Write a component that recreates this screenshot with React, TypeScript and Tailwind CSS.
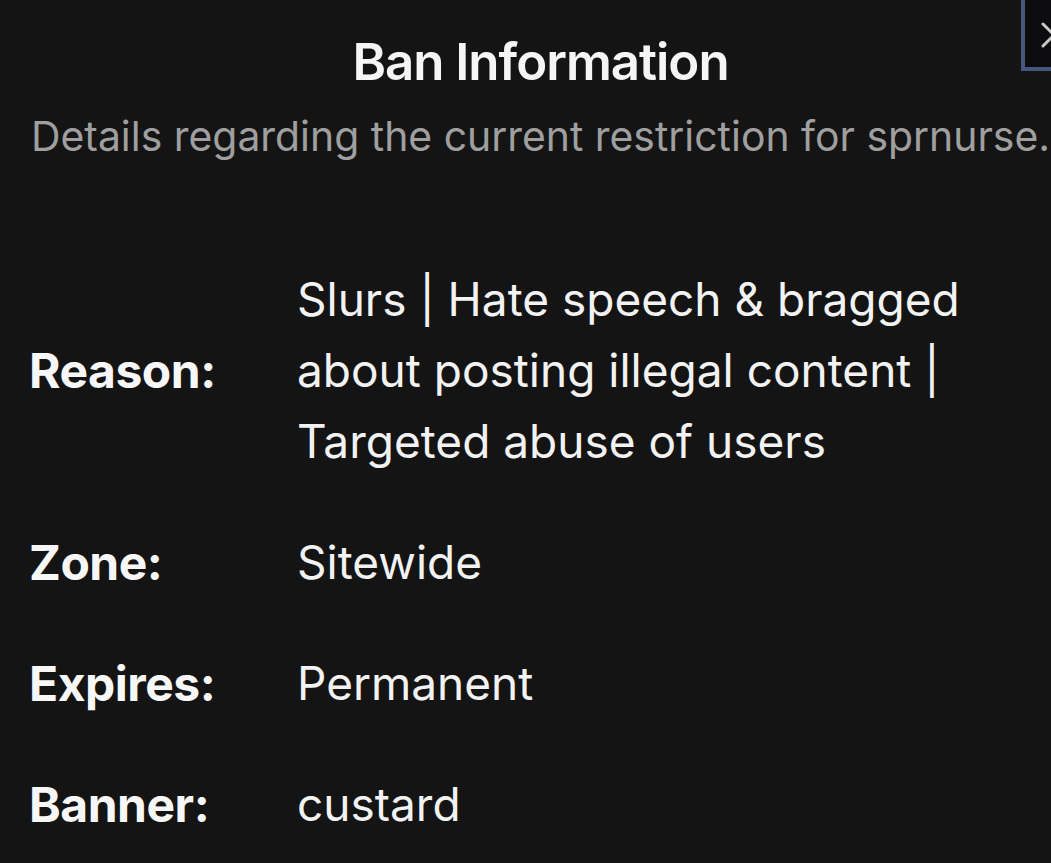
import React from "react";

const rows: { label: string; value: string }[] = [
  { label: "Zone:", value: "Sitewide" },
  { label: "Expires:", value: "Permanent" },
  { label: "Banner:", value: "custard" },
];

export default function App() {
  return (
    <div
      className="relative w-[1051px] h-[863px] overflow-hidden bg-[#141414] text-white"
      style={{ fontFamily: "Inter, 'Noto Sans', sans-serif" }}
    >
      <div className="absolute left-[1021px] top-[-12px] w-[60px] h-[83px] border-[4px] border-[#46577f] bg-[#0c0c0e] flex items-center pl-[14px] pt-[10px]">
        <svg width="30" height="30" viewBox="0 0 30 30">
          <path d="M4 4 L26 26 M26 4 L4 26" stroke="#c9c9c9" strokeWidth="3" strokeLinecap="round" />
        </svg>
      </div>

      <div className="flex flex-col items-center pl-[30px] pt-[30px]">
        <h1 className="text-[51px] leading-[64px] font-semibold tracking-[-0.02em] text-[#f5f5f5]">
          Ban Information
        </h1>
        <p className="mt-[16px] text-[40.9px] leading-[52px] text-[#9f9f9f] whitespace-nowrap">
          Details regarding the current restriction for sprnurse.
        </p>
      </div>

      <div className="flex flex-col gap-[50px] pl-[29px] pt-[102px]">
        <div className="flex items-center">
          <div className="w-[268px] shrink-0 text-[48px] font-bold tracking-[-0.01em] text-[#f7f7f7] leading-[71px]">
            Reason:
          </div>
          <div className="w-[735px] text-[46px] leading-[71px] text-[#f2f2f2]">
            Slurs | Hate speech & bragged about posting illegal content | Targeted abuse of users
          </div>
        </div>
        {rows.map((r) => (
          <div key={r.label} className="flex items-center">
            <div className="w-[268px] shrink-0 text-[48px] font-bold tracking-[-0.01em] text-[#f7f7f7] leading-[71px]">
              {r.label}
            </div>
            <div className="text-[46px] leading-[71px] text-[#f2f2f2]">{r.value}</div>
          </div>
        ))}
      </div>
    </div>
  );
}
